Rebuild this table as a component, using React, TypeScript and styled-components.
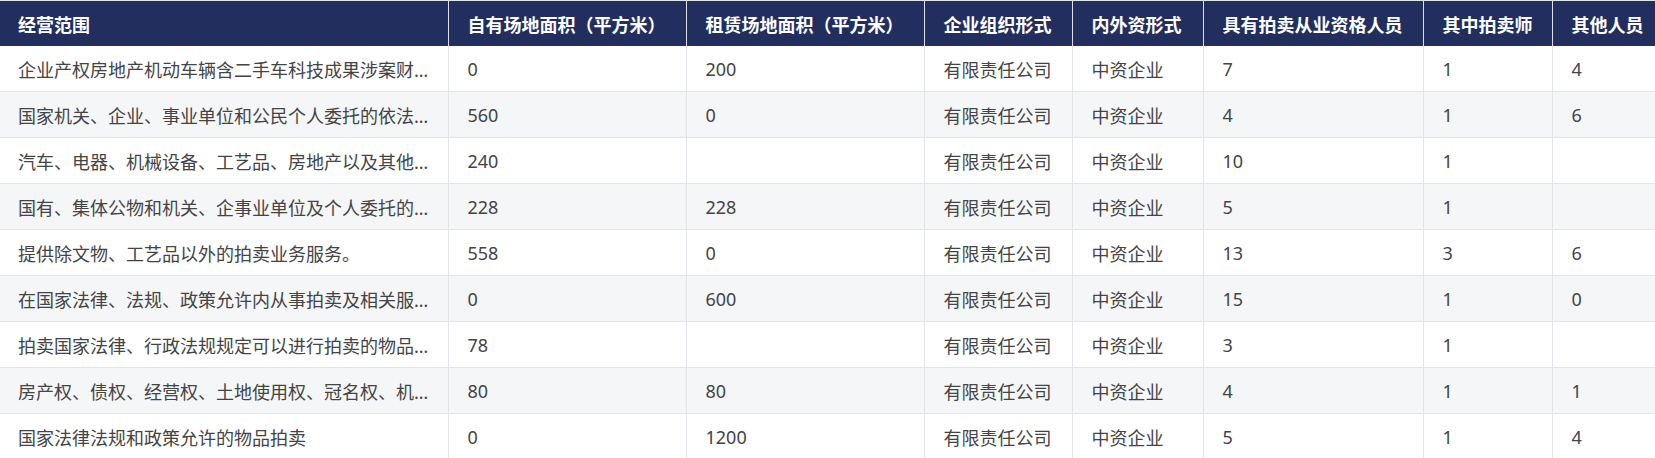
import styled, { createGlobalStyle } from 'styled-components';

const GlobalStyle = createGlobalStyle`
  body {
    margin: 0;
    background: #ffffff;
    font-family: "Noto Sans", "Noto Sans CJK SC", sans-serif;
  }
`;

const columns = [
  { key: 'scope', title: '经营范围', width: 448 },
  { key: 'own', title: '自有场地面积（平方米）', width: 238 },
  { key: 'rent', title: '租赁场地面积（平方米）', width: 238 },
  { key: 'org', title: '企业组织形式', width: 148 },
  { key: 'capital', title: '内外资形式', width: 131 },
  { key: 'qualified', title: '具有拍卖从业资格人员', width: 220 },
  { key: 'auctioneer', title: '其中拍卖师', width: 129 },
  { key: 'other', title: '其他人员', width: 103 },
] as const;

type Row = Record<(typeof columns)[number]['key'], string>;

const rows: Row[] = [
  { scope: '企业产权房地产机动车辆含二手车科技成果涉案财物罚没物品等拍卖', own: '0', rent: '200', org: '有限责任公司', capital: '中资企业', qualified: '7', auctioneer: '1', other: '4' },
  { scope: '国家机关、企业、事业单位和公民个人委托的依法可以转让的物品', own: '560', rent: '0', org: '有限责任公司', capital: '中资企业', qualified: '4', auctioneer: '1', other: '6' },
  { scope: '汽车、电器、机械设备、工艺品、房地产以及其他财产权利', own: '240', rent: '', org: '有限责任公司', capital: '中资企业', qualified: '10', auctioneer: '1', other: '' },
  { scope: '国有、集体公物和机关、企事业单位及个人委托的物品拍卖', own: '228', rent: '228', org: '有限责任公司', capital: '中资企业', qualified: '5', auctioneer: '1', other: '' },
  { scope: '提供除文物、工艺品以外的拍卖业务服务。', own: '558', rent: '0', org: '有限责任公司', capital: '中资企业', qualified: '13', auctioneer: '3', other: '6' },
  { scope: '在国家法律、法规、政策允许内从事拍卖及相关服务业务', own: '0', rent: '600', org: '有限责任公司', capital: '中资企业', qualified: '15', auctioneer: '1', other: '0' },
  { scope: '拍卖国家法律、行政法规规定可以进行拍卖的物品和财产权利', own: '78', rent: '', org: '有限责任公司', capital: '中资企业', qualified: '3', auctioneer: '1', other: '' },
  { scope: '房产权、债权、经营权、土地使用权、冠名权、机动车辆拍卖', own: '80', rent: '80', org: '有限责任公司', capital: '中资企业', qualified: '4', auctioneer: '1', other: '1' },
  { scope: '国家法律法规和政策允许的物品拍卖', own: '0', rent: '1200', org: '有限责任公司', capital: '中资企业', qualified: '5', auctioneer: '1', other: '4' },
];

const Table = styled.table`
  width: 1655px;
  table-layout: fixed;
  border-collapse: collapse;
  font-size: 18px;
`;

const HeadCell = styled.th`
  height: 45px;
  padding: 0 19px;
  background: #222f5e;
  color: #ffffff;
  font-weight: 700;
  text-align: left;
  white-space: nowrap;
  border-top: 1px solid #dfe3ea;
  border-left: 1px solid #dcdfe6;
  &:first-child {
    border-left: none;
    padding-left: 18px;
  }
`;

const BodyRow = styled.tr<{ $striped: boolean }>`
  background: ${(p) => (p.$striped ? '#f5f6f8' : '#ffffff')};
`;

const Cell = styled.td`
  height: 45px;
  padding: 0 19px;
  color: #444444;
  text-align: left;
  white-space: nowrap;
  overflow: hidden;
  text-overflow: ellipsis;
  border-bottom: 1px solid #e2e5ea;
  border-left: 1px solid #e2e5ea;
  &:first-child {
    border-left: none;
    padding: 0 10px 0 18px;
  }
`;

const App = () => {
  return (
    <>
      <GlobalStyle />
      <Table>
        <colgroup>
          {columns.map((c) => (
            <col key={c.key} style={{ width: c.width }} />
          ))}
        </colgroup>
        <thead>
          <tr>
            {columns.map((c) => (
              <HeadCell key={c.key}>{c.title}</HeadCell>
            ))}
          </tr>
        </thead>
        <tbody>
          {rows.map((row, i) => (
            <BodyRow key={i} $striped={i % 2 === 1}>
              {columns.map((c) => (
                <Cell key={c.key} title={row[c.key]}>
                  {row[c.key]}
                </Cell>
              ))}
            </BodyRow>
          ))}
        </tbody>
      </Table>
    </>
  );
};

export default App;
